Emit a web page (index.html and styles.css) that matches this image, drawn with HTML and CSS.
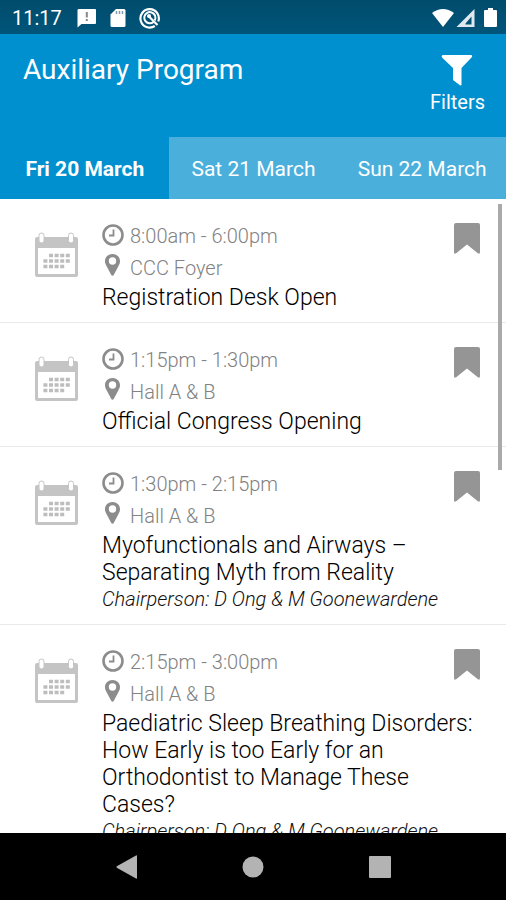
FILE: index.html
```html
<!DOCTYPE html>
<html lang="en">
<head>
<meta charset="utf-8">
<meta name="viewport" content="width=device-width, initial-scale=1">
<title>Auxiliary Program</title>
<link rel="stylesheet" href="styles.css">
</head>
<body>
<svg class="sprite" aria-hidden="true">
  <symbol id="calendar" viewBox="0 0 44 46">
    <path fill="#c4c4c4" fill-rule="evenodd" d="M3 5H42Q44 5 44 7V43Q44 45 42 45H3Q1 45 1 43V7Q1 5 3 5ZM4 16V42H41V16Z"/>
    <rect x="5" y="1" width="5" height="10" rx="2.500" fill="#fff" stroke="#c4c4c4"/>
    <rect x="34.500" y="1" width="5" height="10" rx="2.500" fill="#fff" stroke="#c4c4c4"/>
    <path stroke="#bdbdbd" stroke-width="3.600" stroke-dasharray="4 1.600" d="M15 23.500H35.800M9.400 29H35.800M9.400 34.500H30.200"/>
  </symbol>
  <symbol id="clock" viewBox="0 0 22 22">
    <circle cx="11" cy="11" r="9.500" fill="none" stroke="#8c8c8c" stroke-width="2.600"/>
    <path fill="none" stroke="#8c8c8c" stroke-width="1.800" d="M11.500 5.500V11.500H7"/>
  </symbol>
  <symbol id="pin" viewBox="0 0 22 22">
    <path fill="#8c8c8c" fill-rule="evenodd" d="M10.500 0C6.300 0 3 3 3 7C3 9 3.600 10.500 4.500 12L9 20.500Q10.500 23 12 20.500L16.500 12C17.400 10.500 18 9 18 7C18 3 14.700 0 10.500 0ZM10.500 3.300A3.700 3.700 0 1 1 10.500 10.700A3.700 3.700 0 1 1 10.500 3.300Z"/>
  </symbol>
  <symbol id="bookmark" viewBox="0 0 26 31">
    <path fill="#959595" d="M2 0H24Q26 0 26 2V29Q26 32 23.500 30L13 21.500L2.500 30Q0 32 0 29V2Q0 0 2 0Z"/>
  </symbol>
</svg>

<div class="status">
  <span class="status-time">11:17</span>
  <svg width="20" height="20" viewBox="0 0 20 20"><path fill="#fff" d="M2 1H18Q19 1 19 2V15Q19 16 18 16H4.500L.5 19.500V2Q.5 1 2 1Z"/><path stroke="#888" stroke-width="2" d="M9.800 4V9.500M9.800 11V13"/></svg>
  <svg width="16" height="20" viewBox="0 0 16 20"><path fill="#fff" d="M6 1H14Q15.500 1 15.500 2.500V17.500Q15.500 19 14 19H2Q.5 19 .5 17.500V6.500Z"/><path stroke="#7fa0aa" stroke-width="1.500" d="M6.500 3V6M9.500 3V6M12.500 3V6"/></svg>
  <svg width="22" height="22" viewBox="0 0 22 22"><g fill="none" stroke="#fff"><path stroke-width="2.200" d="M15.800 19A9.200 9.200 0 1 1 19.300 14.500"/><path stroke-width="2" d="M14.500 15A5.600 5.600 0 1 1 16 8.500Q17 11 15.800 13.500"/><path stroke-width="2.200" d="M9 8.500L18.500 18"/></g><circle cx="10" cy="9" r="2" fill="#fff"/></svg>
  <span class="status-right">
    <svg width="22" height="20" viewBox="0 0 22 20"><path fill="#fff" d="M0 5Q11-3 22 5L11 19Z"/></svg>
    <svg width="19" height="20" viewBox="0 0 19 20"><path fill="#dfeaef" fill-rule="evenodd" d="M18.500 1V19H.5ZM15.500 8.500L9.500 15.500V16.500H15.500Z"/></svg>
    <svg width="13" height="20" viewBox="0 0 13 20"><path fill="#fff" d="M4 0H9V2H12Q13 2 13 3V18Q13 19 12 19H1Q0 19 0 18V3Q0 2 1 2H4Z"/></svg>
  </span>
</div>

<header class="header">
  <h1 class="title">Auxiliary Program</h1>
  <button class="filters" type="button">
    <svg width="32" height="32" viewBox="0 0 32 32"><path fill="#fff" d="M1.500 1H30.500Q32 2 30.500 3.500L20.500 14V31Q19.500 32 18 30.500L12 26V14L1 3.500Q0 2 1.500 1Z"/></svg>
    <span>Filters</span>
  </button>
</header>

<nav class="tabs">
  <button class="tab tab-active" type="button">Fri 20 March</button>
  <button class="tab" type="button">Sat 21 March</button>
  <button class="tab" type="button">Sun 22 March</button>
</nav>

<main class="schedule">
  <div class="list">
    <article class="event">
      <svg class="event-icon"><use href="#calendar"/></svg>
      <div class="event-body">
        <p class="meta meta-time"><svg><use href="#clock"/></svg>8:00am - 6:00pm</p>
        <p class="meta meta-place"><svg><use href="#pin"/></svg>CCC Foyer</p>
        <h2 class="event-title">Registration Desk Open</h2>
      </div>
      <button class="save" type="button" aria-label="Bookmark"><svg><use href="#bookmark"/></svg></button>
    </article>
    <article class="event">
      <svg class="event-icon"><use href="#calendar"/></svg>
      <div class="event-body">
        <p class="meta meta-time"><svg><use href="#clock"/></svg>1:15pm - 1:30pm</p>
        <p class="meta meta-place"><svg><use href="#pin"/></svg>Hall A &amp; B</p>
        <h2 class="event-title">Official Congress Opening</h2>
      </div>
      <button class="save" type="button" aria-label="Bookmark"><svg><use href="#bookmark"/></svg></button>
    </article>
    <article class="event">
      <svg class="event-icon"><use href="#calendar"/></svg>
      <div class="event-body">
        <p class="meta meta-time"><svg><use href="#clock"/></svg>1:30pm - 2:15pm</p>
        <p class="meta meta-place"><svg><use href="#pin"/></svg>Hall A &amp; B</p>
        <h2 class="event-title">Myofunctionals and Airways – Separating Myth from Reality</h2>
        <p class="chair">Chairperson: D Ong &amp; M Goonewardene</p>
      </div>
      <button class="save" type="button" aria-label="Bookmark"><svg><use href="#bookmark"/></svg></button>
    </article>
    <article class="event">
      <svg class="event-icon"><use href="#calendar"/></svg>
      <div class="event-body">
        <p class="meta meta-time"><svg><use href="#clock"/></svg>2:15pm - 3:00pm</p>
        <p class="meta meta-place"><svg><use href="#pin"/></svg>Hall A &amp; B</p>
        <h2 class="event-title">Paediatric Sleep Breathing Disorders: How Early is too Early for an Orthodontist to Manage These Cases?</h2>
        <p class="chair">Chairperson: D Ong &amp; M Goonewardene</p>
      </div>
      <button class="save" type="button" aria-label="Bookmark"><svg><use href="#bookmark"/></svg></button>
    </article>
  </div>
  <div class="scroll-thumb"></div>
</main>

<footer class="system-nav">
  <button type="button" aria-label="Back"><svg width="22" height="24" viewBox="0 0 22 24"><path fill="#b3b3b3" d="M20 .5Q21 0 21 1V23Q21 24 20 23.500L.8 12.800Q0 12 .8 11.200Z"/></svg></button>
  <button type="button" aria-label="Home"><svg width="22" height="22" viewBox="0 0 22 22"><circle cx="11" cy="11" r="10.500" fill="#b3b3b3"/></svg></button>
  <button type="button" aria-label="Recent apps"><svg width="22" height="22" viewBox="0 0 22 22"><rect width="22" height="22" rx="1" fill="#b3b3b3"/></svg></button>
</footer>
</body>
</html>
```
FILE: styles.css
```css
* {
  box-sizing: border-box;
}

body {
  margin: 0;
  height: 100vh;
  display: flex;
  flex-direction: column;
  overflow: hidden;
  background: #fff;
  font-family: Roboto, "Liberation Sans", sans-serif;
}

h1, h2, p {
  margin: 0;
}

button {
  margin: 0;
  padding: 0;
  border: 0;
  background: none;
  color: inherit;
  font: inherit;
}

svg {
  display: block;
  flex: none;
}

.sprite {
  position: absolute;
  width: 0;
  height: 0;
}

.status {
  flex: none;
  display: flex;
  align-items: center;
  gap: 13px;
  height: 34px;
  padding: 2px 9px 0 12px;
  background: linear-gradient(#004c6c, #00557a);
  color: #fff;
}

.status-time {
  font-size: 20px;
  margin-right: 2px;
}

.status-right {
  display: flex;
  gap: 4px;
  margin-left: auto;
}

.status-right svg:first-child {
  margin-right: -2px;
}

.status-right svg:last-child {
  margin-left: 5px;
}

.header {
  flex: none;
  display: flex;
  justify-content: space-between;
  align-items: flex-start;
  height: 103px;
  padding: 20px 21px 0 23px;
  background: #0090cf;
  color: #fff;
}

.title {
  font-size: 28px;
  font-weight: 400;
  line-height: 32px;
}

.filters {
  display: flex;
  flex-direction: column;
  align-items: center;
  gap: 4px;
  font-size: 20px;
  line-height: 24px;
}

.tabs {
  flex: none;
  display: grid;
  grid-template-columns: repeat(3, 1fr);
  height: 62px;
  background: #0090cf;
  color: #fff;
}

.tab {
  padding: 2px 0 0 1px;
  background: #4bafdc;
  font-size: 21px;
}

.tab-active {
  background: #0090cf;
  font-weight: 700;
}

.schedule {
  position: relative;
  flex: 1;
  min-height: 0;
}

.list {
  height: 100%;
  overflow-y: auto;
  scrollbar-width: none;
}

.event {
  display: flex;
  align-items: flex-start;
  padding: 21px 26px 11px 34px;
  border-bottom: 1px solid #e9e9e9;
}

.event-icon {
  width: 44px;
  height: 46px;
  margin: 12px 24px 0 0;
}

.event-body {
  flex: 1;
  min-width: 0;
}

.meta {
  display: flex;
  align-items: center;
  gap: 6px;
  height: 32px;
  color: #828282;
  font-size: 20px;
  font-weight: 300;
}

.meta svg {
  width: 22px;
  height: 22px;
}

.meta-time svg {
  margin-bottom: 2px;
}

.meta-place svg {
  margin-bottom: 6px;
}

.event-title {
  margin-right: -26px;
  color: #000;
  font-size: 23px;
  font-weight: 300;
  line-height: 27px;
}

.chair {
  margin-right: -26px;
  color: #111;
  font-size: 20px;
  font-style: italic;
  font-weight: 300;
  line-height: 27px;
}

.save {
  margin-top: 3px;
}

.save svg {
  width: 26px;
  height: 31px;
}

.scroll-thumb {
  position: absolute;
  top: 5px;
  right: 4px;
  width: 4px;
  height: 42%;
  background: #aaa;
}

.system-nav {
  flex: none;
  display: grid;
  grid-template-columns: repeat(3, 1fr);
  height: 67px;
  padding: 0 12.5%;
  background: #000;
}

.system-nav button {
  display: flex;
  justify-content: center;
  align-items: center;
}
```
